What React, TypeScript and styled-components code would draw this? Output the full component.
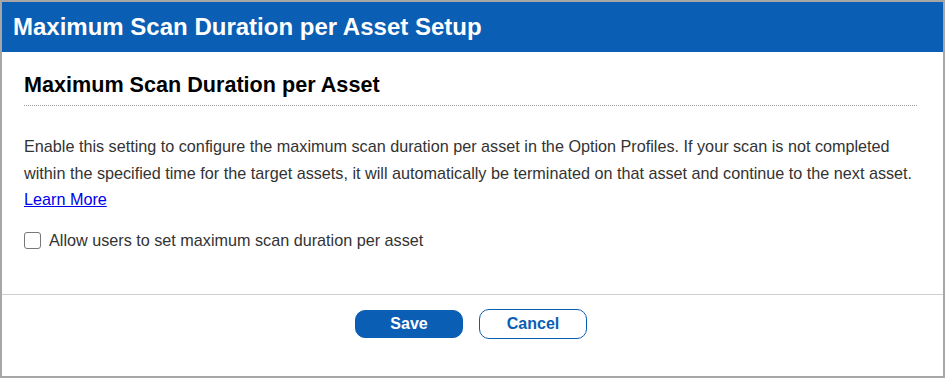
import styled, { createGlobalStyle } from 'styled-components';

const GlobalStyle = createGlobalStyle`
  html, body {
    margin: 0;
    padding: 0;
    background: #fff;
  }

  * {
    box-sizing: border-box;
  }
`;

const App = () => {
  return (
    <>
      <GlobalStyle />
      <DialogWrapper>
        <DialogHeader>
          <h1>Maximum Scan Duration per Asset Setup</h1>
        </DialogHeader>
        <DialogBody>
          <SectionTitle>Maximum Scan Duration per Asset</SectionTitle>
          <Description>
            Enable this setting to configure the maximum scan duration per asset in the Option
            Profiles. If your scan is not completed within the specified time for the target
            assets, it will automatically be terminated on that asset and continue to the next
            asset.
            <br />
            <a href='#'>Learn More</a>
          </Description>
          <CheckboxRow>
            <input type='checkbox' />
            <span>Allow users to set maximum scan duration per asset</span>
          </CheckboxRow>
        </DialogBody>
        <DialogFooter>
          <Button variant='primary'>Save</Button>
          <Button variant='secondary'>Cancel</Button>
        </DialogFooter>
      </DialogWrapper>
    </>
  );
};

const DialogWrapper = styled.div`
  width: 945px;
  height: 378px;
  border: 2px solid #a6a6a6;
  display: flex;
  flex-direction: column;
  font-family: 'Liberation Sans', Arial, sans-serif;
  background: #fff;
`;

const DialogHeader = styled.header`
  height: 50px;
  background: #0a5eb3;
  display: flex;
  align-items: center;
  padding: 0 11px;

  h1 {
    margin: 0;
    color: #fff;
    font-size: 24px;
    font-weight: 700;
  }
`;

const DialogBody = styled.div`
  flex: 1;
  padding: 20px 26px 0 22px;
`;

const SectionTitle = styled.h2`
  margin: 0;
  padding-bottom: 8px;
  font-size: 21.6px;
  font-weight: 700;
  color: #000;
  border-bottom: 1px dotted #999;
  line-height: 25px;
`;

const Description = styled.p`
  margin: 27px 0 0;
  font-size: 16.2px;
  line-height: 26.5px;
  color: #333;

  a {
    color: #0000ee;
    text-decoration: underline;
  }
`;

const CheckboxRow = styled.label`
  display: flex;
  align-items: center;
  gap: 8px;
  margin-top: 18px;
  font-size: 16.2px;
  color: #333;

  input {
    appearance: none;
    margin: 0;
    width: 17px;
    height: 17px;
    border: 1px solid #777;
    border-radius: 3px;
    background: #fff;
  }
`;

const DialogFooter = styled.footer`
  height: 82px;
  border-top: 1px solid #cfcfcf;
  display: flex;
  justify-content: center;
  align-items: flex-start;
  gap: 16px;
  padding: 14px 3px 0 0;
`;

const Button = styled.button<{ variant: 'primary' | 'secondary' }>`
  width: 108px;
  border-radius: 10px;
  font-family: 'Liberation Sans', Arial, sans-serif;
  font-size: 16px;
  font-weight: 700;
  cursor: pointer;
  border: 1px solid #0a5eb3;
  background: ${({ variant }) => (variant === 'primary' ? '#0a5eb3' : '#fff')};
  color: ${({ variant }) => (variant === 'primary' ? '#fff' : '#0a5eb3')};
  margin-top: ${({ variant }) => (variant === 'primary' ? '1px' : '0')};
  height: ${({ variant }) => (variant === 'primary' ? '28px' : '30px')};
`;

export default App;
